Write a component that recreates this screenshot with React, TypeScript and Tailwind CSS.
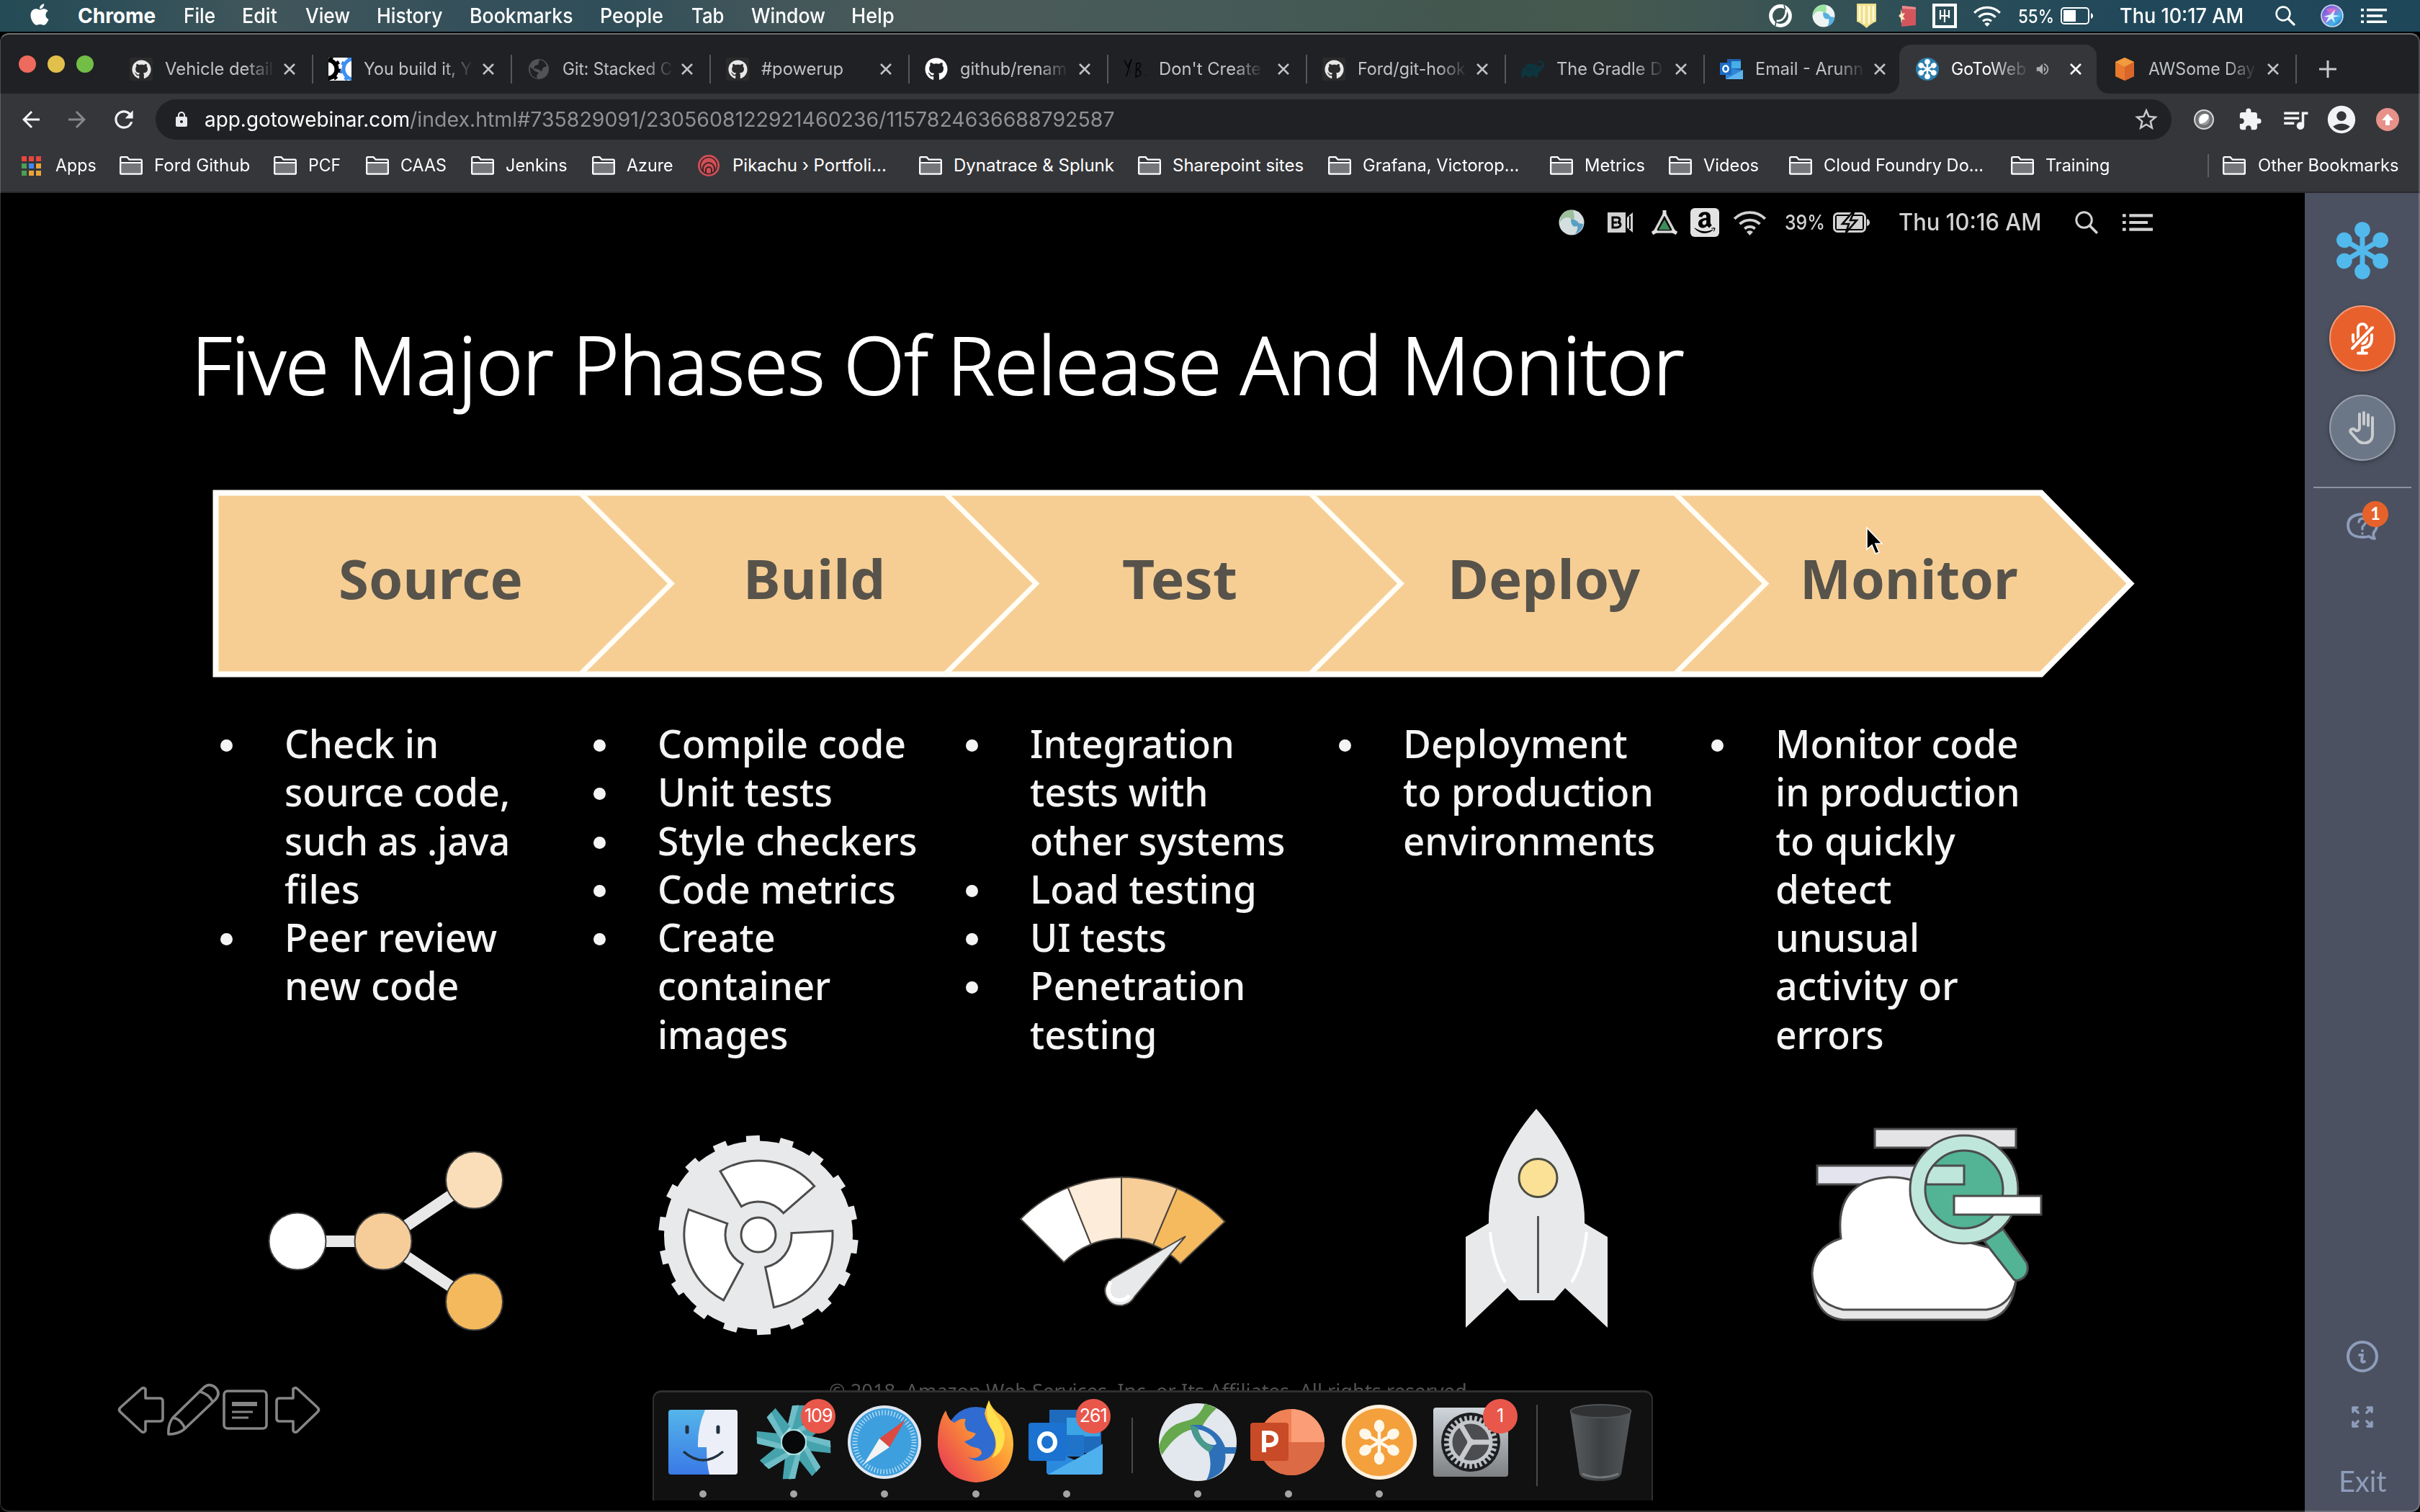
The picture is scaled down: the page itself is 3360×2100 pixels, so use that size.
import React, { useLayoutEffect, useRef, useState } from 'react';
import { FaApple, FaGithub, FaAmazon } from 'react-icons/fa';
import { SiGradle } from 'react-icons/si';
import {
  MdArrowBack,
  MdArrowForward,
  MdRefresh,
  MdLock,
  MdStarBorder,
  MdExtension,
  MdQueueMusic,
  MdAccountCircle,
  MdVolumeUp,
} from 'react-icons/md';

/** One line of text that is condensed or widened to span exactly `w` pixels. */
function Fit({ w, className = '', children }: { w: number; className?: string; children: string }) {
  const ref = useRef<HTMLSpanElement>(null);
  const [scale, setScale] = useState(1);
  useLayoutEffect(() => {
    if (ref.current) setScale(w / ref.current.offsetWidth);
  }, [w, children]);
  return (
    <span className={'block shrink-0 ' + className} style={{ width: w }}>
      <span ref={ref} className="inline-block origin-left whitespace-pre" style={{ transform: `scaleX(${scale})` }}>
        {children}
      </span>
    </span>
  );
}

const polar = (cx: number, cy: number, r: number, deg: number) => {
  const a = (deg * Math.PI) / 180;
  return `${(cx + r * Math.sin(a)).toFixed(1)} ${(cy - r * Math.cos(a)).toFixed(1)}`;
};

/** Ring segment between two radii; angles are degrees clockwise from the top. */
const sector = (cx: number, cy: number, r0: number, r1: number, a0: number, a1: number) =>
  `M${polar(cx, cy, r1, a0)}A${r1} ${r1} 0 0 1 ${polar(cx, cy, r1, a1)}L${polar(cx, cy, r0, a1)}A${r0} ${r0} 0 0 0 ${polar(cx, cy, r0, a0)}Z`;

/* ---------- macOS menu bar ---------- */

const MENUS = [
  { t: 'Chrome', w: 108, cls: 'w-[147px] font-bold' },
  { t: 'File', w: 44, cls: 'w-[81px] font-medium' },
  { t: 'Edit', w: 49, cls: 'w-[88px] font-medium' },
  { t: 'View', w: 62, cls: 'w-[99px] font-medium' },
  { t: 'History', w: 92, cls: 'w-[129px] font-medium' },
  { t: 'Bookmarks', w: 144, cls: 'w-[181px] font-medium' },
  { t: 'People', w: 88, cls: 'w-[127px] font-medium' },
  { t: 'Tab', w: 45, cls: 'w-[83px] font-medium' },
  { t: 'Window', w: 103, cls: 'w-[139px] font-medium' },
  { t: 'Help', w: 60, cls: 'w-[62px] font-medium' },
];

function Wifi({ className = '' }: { className?: string }) {
  return (
    <svg viewBox="0 0 42 32" className={className} fill="none" stroke="currentColor" strokeWidth="3.4">
      <path d="M2 11.5a27 27 0 0 1 38 0M8.5 18a18 18 0 0 1 25 0M14.6 23.8a9.5 9.5 0 0 1 12.8 0" />
      <path d="M21 32l-4-4.4a6 6 0 0 1 8 0z" fill="currentColor" stroke="none" />
    </svg>
  );
}

function Search({ className = '' }: { className?: string }) {
  return (
    <svg viewBox="0 0 28 28" className={className} fill="none" stroke="currentColor" strokeWidth="2.6">
      <circle cx="11" cy="11" r="9.4" />
      <path d="M18 18l9 9" strokeWidth="3.2" />
    </svg>
  );
}

function Lines({ className = '' }: { className?: string }) {
  return (
    <svg viewBox="0 0 36 20" className={className} fill="currentColor">
      <path d="M0 0h4v3.6H0zM8 0h28v3.6H8zM0 8.2h4v3.6H0zM8 8.2h22v3.6H8zM0 16.4h4V20H0zM8 16.4h28V20H8z" />
    </svg>
  );
}

function MenuBar() {
  return (
    <div className="flex h-[44px] shrink-0 items-center bg-[linear-gradient(90deg,#244b56_0%,#2f4f58_5%,#41565b_11%,#35505a_19%,#304e59_25%,#42565a_32%,#4b5a58_38%,#455a56_52%,#43574f_60%,#46594f_66%,#3d5553_72%,#2b4e58_80%,#21485a_88%,#1f475a_100%)] pl-[39px] text-[28px] text-white">
      <div className="w-[69px] shrink-0">
        <FaApple className="h-[34px] w-[32px] -translate-y-[2px]" />
      </div>
      {MENUS.map((m) => (
        <div key={m.t} className={'shrink-0 ' + m.cls}>
          <Fit w={m.w}>{m.t}</Fit>
        </div>
      ))}
      <div className="flex-1" />
      <div className="flex w-[904px] shrink-0 items-center">
        <div className="w-[60px]">
          <svg viewBox="0 0 32 32" className="size-8" fill="none" stroke="white">
            <circle cx="16" cy="16" r="13.4" strokeWidth="5" />
            <path d="M10 23c10 1 16-8 13-19" strokeWidth="2.6" />
            <path d="M21 1.5l2 6M9 30l1-8" stroke="#2f4f56" strokeWidth="1.6" />
          </svg>
        </div>
        <div className="w-[61px]">
          <svg viewBox="0 0 32 32" className="size-8">
            <circle cx="16" cy="16" r="15.5" fill="#eef4f4" />
            <path d="M2 15C6 8 14 8 18 14c2-3 2-8 1-13C9-1 1 6 1 15z" fill="#9be3a0" />
            <path d="M15 12c0 7 4 10 8 8 1 4 0 8-2 11 6-2 10-7 10-13l-6-1c-1-4-6-6-10-5z" fill="#58aee0" />
          </svg>
        </div>
        <div className="w-[59px]">
          <svg viewBox="0 0 29 34" className="h-[34px] w-[29px]">
            <path d="M1 0h27v25q-6 2-13.500 9Q7 27 1 25z" fill="#efe08c" />
            <path d="M5 3v21M11 3v25M18 3v25M24 3v21" stroke="#fffbe2" strokeWidth="2.6" />
          </svg>
        </div>
        <div className="w-[47px]">
          <svg viewBox="0 0 25 30" className="h-[30px] w-[25px]">
            <path d="M5 1l19 2v25L4 30z" fill="#d4565d" />
            <path d="M5 1l19 2v3L5 5z" fill="#e98a8c" />
            <path d="M3 5l2 7 4-1-3 5 3 4H5l-1 6-1-8-3-3 3-3z" fill="#ffe9c0" />
          </svg>
        </div>
        <div className="w-[55px]">
          <svg viewBox="0 0 34 34" className="size-[34px]">
            <path d="M0 0h34v34H0z" fill="white" />
            <path d="M4 4h26v26H4z" fill="#2b4d57" />
            <path d="M11 9v8h12V9M17 8v18M11 17v5M23 17v3" fill="none" stroke="white" strokeWidth="2.200" />
          </svg>
        </div>
        <div className="w-[64px]">
          <Wifi className="h-[30px] w-[42px]" />
        </div>
        <div className="w-[59px]">
          <Fit w={50} className="text-[26px] font-medium">55%</Fit>
        </div>
        <div className="w-[82px]">
          <svg viewBox="0 0 46 24" className="h-6 w-[46px]" fill="none" stroke="white" strokeWidth="2">
            <rect x="1" y="1" width="38" height="22" rx="4" />
            <path d="M4 4h17v16H4z" fill="white" stroke="none" />
            <path d="M42 8q3 1 3 4t-3 4z" fill="white" stroke="none" />
          </svg>
        </div>
        <div className="w-[216px]">
          <Fit w={172} className="font-medium">Thu 10:17 AM</Fit>
        </div>
        <div className="w-[63px]">
          <Search className="size-7" />
        </div>
        <div className="w-[56px]">
          <svg viewBox="0 0 32 32" className="size-8">
            <defs>
              <linearGradient id="siri" x1="0" y1="0" x2="1" y2="1">
                <stop offset="0" stopColor="#3a5bd8" />
                <stop offset=".4" stopColor="#a06fe0" />
                <stop offset=".7" stopColor="#3bb7ea" />
                <stop offset="1" stopColor="#2b3b99" />
              </linearGradient>
            </defs>
            <circle cx="16" cy="16" r="15" fill="url(#siri)" stroke="#cfdcec" strokeWidth="1.600" />
            <path d="M7 7q8-4 16 1l-7 7z" fill="#e56fc3" opacity=".7" />
            <path d="M4 17l10-3 6-7-2 8 9 1-9 2 2 8-5-6-8 6 4-8z" fill="#d9f8ff" />
          </svg>
        </div>
        <Lines className="h-5 w-9" />
      </div>
    </div>
  );
}

/* ---------- browser chrome ---------- */

function Cat({ boxed = true }: { boxed?: boolean }) {
  return boxed ? (
    <div className="flex size-8 items-center justify-center rounded-[3px] bg-[#2b2b2b]">
      <FaGithub className="size-[27px] text-[#e8e8e8]" />
    </div>
  ) : (
    <FaGithub className="size-8 text-white" />
  );
}

const SPOKES = [0, 60, 120, 180, 240, 300];

function Burst({ className = '', color }: { className?: string; color: string }) {
  return (
    <svg viewBox="-36 -40 72 80" className={className} fill={color}>
      {SPOKES.map((a) => (
        <g key={a} transform={`rotate(${a})`}>
          <path d="M-3.500 0v-22h7v22z" />
          <circle cy="-29" r="10.800" />
        </g>
      ))}
      <circle r="6" />
    </svg>
  );
}

const GearIcon = (
  <svg viewBox="0 0 32 32" className="size-8">
    <path d="M0 0h32v32H0z" fill="white" />
    <g fill="none">
      <circle cx="-1" cy="16" r="12.500" stroke="black" strokeWidth="6" />
      <circle cx="-1" cy="16" r="16.500" stroke="black" strokeWidth="4" strokeDasharray="5 6.400" />
      <circle cx="35" cy="16" r="14" stroke="#3f8ff0" strokeWidth="5" />
      <circle cx="35" cy="16" r="17" stroke="#3f8ff0" strokeWidth="4" strokeDasharray="5 6.800" />
    </g>
  </svg>
);

const GlobeIcon = (
  <svg viewBox="0 0 32 32" className="size-8">
    <circle cx="16" cy="16" r="14" fill="#515357" />
    <path d="M17 3q8 1 10 9l-5 2-2 5-5-3-6-1 2-4 4-1 1-3zM4 13l7 6 5 2-3 4 1 4Q4 27 4 16z" fill="#202124" />
  </svg>
);

const YbIcon = (
  <svg viewBox="0 0 32 32" className="size-8" fill="none" stroke="#050506" strokeWidth="1.600">
    <path d="M1 4l5 9 5-11-7 24M9 20h1M18 8l-1 20M17 9c9-5 8 5 1 8 9 0 7 10-1 9M31 24v1" />
  </svg>
);

const OutlookIcon = (
  <svg viewBox="0 0 32 32" className="size-8">
    <path d="M10 2h19v16H10z" fill="#1f5fae" />
    <path d="M16 5h13v10H16z" fill="#46aee8" />
    <path d="M8 14l24 4v12H8z" fill="#2f86d6" />
    <path d="M8 30l24-13v13z" fill="#5cb4ee" />
    <path d="M0 7h16v17H0z" fill="#1d6cc5" />
    <ellipse cx="8" cy="15.500" rx="3.600" ry="4.200" fill="none" stroke="white" strokeWidth="2.400" />
  </svg>
);

const WebinarIcon = (
  <div className="flex size-8 items-center justify-center rounded-full bg-[#2a7fae]">
    <Burst className="h-[28px] w-[26px]" color="#ffffff" />
  </div>
);

const AwsIcon = (
  <svg viewBox="0 0 32 32" className="size-8">
    <path d="M16 0l13 6v20l-13 6-13-6V6z" fill="#e8792e" />
    <path d="M16 0l13 6-13 7L3 6z" fill="#f29a3e" />
    <path d="M16 13l13-7v20l-13 6z" fill="#d9652b" />
  </svg>
);

const TABS = [
  { t: 'Vehicle detail', w: 150, icon: <Cat />, cls: 'w-[276px]', fade: true },
  { t: 'You build it, Y', w: 150, icon: GearIcon, cls: 'w-[276px]', fade: true },
  { t: 'Git: Stacked C', w: 152, icon: GlobeIcon, cls: 'w-[276px]', fade: true },
  { t: '#powerup', w: 114, icon: <Cat />, cls: 'w-[276px]', fade: false },
  { t: 'github/renam', w: 148, icon: <Cat boxed={false} />, cls: 'w-[276px]', fade: true },
  { t: "Don't Create", w: 142, icon: YbIcon, cls: 'w-[276px]', fade: true },
  { t: 'Ford/git-hook', w: 150, icon: <Cat />, cls: 'w-[276px]', fade: true },
  { t: 'The Gradle D', w: 147, icon: <SiGradle className="size-8 text-[#0d3540]" />, cls: 'w-[276px]', fade: true },
  { t: 'Email - Arunn', w: 150, icon: OutlookIcon, cls: 'w-[272px]', fade: true },
  { t: 'GoToWeb', w: 104, icon: WebinarIcon, cls: 'w-[274px]', fade: true, active: true },
  { t: 'AWSome Day', w: 148, icon: AwsIcon, cls: 'w-[276px]', fade: true },
];

function TabStrip() {
  return (
    <div className="flex h-[84px] shrink-0 items-end bg-[#202124] text-[24px]">
      <div className="flex h-[68px] w-[157px] shrink-0 items-center gap-[16px] pb-[14px] pl-[26px]">
        <i className="size-6 rounded-full bg-[#ed6a5e]" />
        <i className="size-6 rounded-full bg-[#e1c04c]" />
        <i className="size-6 rounded-full bg-[#72be47]" />
      </div>
      {TABS.map((tab, i) => (
        <div
          key={tab.t}
          className={
            'relative flex h-[68px] shrink-0 items-center pl-[23px] ' +
            tab.cls +
            (tab.active ? ' rounded-t-[16px] bg-[#35363a] text-white' : ' text-[#bfc2c6]')
          }
        >
          <div className="size-8 shrink-0">{tab.icon}</div>
          <div className="ml-[17px] w-[154px] shrink-0">
            <Fit
              w={tab.w}
              className={
                tab.fade
                  ? tab.active
                    ? '[mask-image:linear-gradient(90deg,#000_50%,transparent_105%)]'
                    : '[mask-image:linear-gradient(90deg,#000_74%,transparent_102%)]'
                  : ''
              }
            >
              {tab.t}
            </Fit>
          </div>
          {tab.active && <MdVolumeUp className="mr-[16px] -ml-[38px] size-[22px] shrink-0 text-[#a9abae]" />}
          <svg viewBox="0 0 16 16" className="ml-[11px] size-4 shrink-0" stroke="currentColor" strokeWidth="2.600">
            <path d="M1 1l14 14M15 1L1 15" />
          </svg>
          {i !== 8 && i !== 9 && <div className="absolute right-[-2px] h-10 w-[2px] bg-[#55575b]" />}
          {tab.active && (
            <>
              <div className="absolute bottom-0 -left-4 size-4 bg-[radial-gradient(circle_at_0_0,transparent_15.500px,#35363a_16px)]" />
              <div className="absolute -right-4 bottom-0 size-4 bg-[radial-gradient(circle_at_100%_0,transparent_15.500px,#35363a_16px)]" />
            </>
          )}
        </div>
      ))}
      <div className="flex h-[68px] items-center pl-[33px]">
        <svg viewBox="0 0 24 24" className="size-6" stroke="#c6c8cb" strokeWidth="3">
          <path d="M12 0v24M0 12h24" />
        </svg>
      </div>
    </div>
  );
}

function Toolbar() {
  return (
    <div className="flex h-[72px] shrink-0 items-center bg-[#35363a] text-[#f1f3f4]">
      <div className="flex w-[216px] shrink-0 items-center pl-[25px]">
        <MdArrowBack className="mr-[28px] size-[36px]" />
        <MdArrowForward className="mr-[28px] size-[36px] text-[#86878a]" />
        <MdRefresh className="size-[38px]" />
      </div>
      <div className="flex h-[56px] w-[2799px] shrink-0 items-center rounded-full bg-[#202124] pl-[24px]">
        <MdLock className="size-[24px] text-[#e8eaed]" />
        <Fit w={285} className="ml-[20px] text-[28px] text-white">app.gotowebinar.com</Fit>
        <Fit w={979} className="text-[28px] text-[#8f9195]">
          /index.html#735829091/2305608122921460236/1157824636688792587
        </Fit>
        <MdStarBorder className="mr-[16px] ml-auto size-[38px] text-[#c7c9cc]" />
      </div>
      <div className="flex flex-1 items-center pl-[31px]">
        <svg viewBox="0 0 28 28" className="mr-[33px] size-7">
          <circle cx="14" cy="14" r="13" fill="#6d6f72" stroke="#d7d7d7" strokeWidth="2" />
          <circle cx="14" cy="14" r="8" fill="#9a9a9a" />
          <path d="M8 20Q5 8 15 6q8 0 5 7-4 7-12 7z" fill="white" />
        </svg>
        <MdExtension className="mr-[25px] size-[34px]" />
        <MdQueueMusic className="mr-[20px] size-[42px]" />
        <MdAccountCircle className="mr-[25px] size-[46px]" />
        <svg viewBox="0 0 32 32" className="size-8">
          <circle cx="16" cy="16" r="16" fill="#e69189" />
          <path d="M16 8l8 9h-5v7h-6v-7H8z" fill="white" />
        </svg>
      </div>
    </div>
  );
}

const BOOKMARKS = [
  { t: 'Ford Github', w: 133, cls: 'w-[214px]' },
  { t: 'PCF', w: 45, cls: 'w-[128px]' },
  { t: 'CAAS', w: 64, cls: 'w-[146px]' },
  { t: 'Jenkins', w: 86, cls: 'w-[168px]' },
  { t: 'Azure', w: 65, cls: 'w-[147px]' },
  { t: 'Pikachu › Portfoli...', w: 214, cls: 'w-[307px]' },
  { t: 'Dynatrace & Splunk', w: 223, cls: 'w-[304px]' },
  { t: 'Sharepoint sites', w: 182, cls: 'w-[264px]' },
  { t: 'Grafana, Victorop...', w: 217, cls: 'w-[308px]' },
  { t: 'Metrics', w: 84, cls: 'w-[165px]' },
  { t: 'Videos', w: 77, cls: 'w-[167px]' },
  { t: 'Cloud Foundry Do...', w: 222, cls: 'w-[308px]' },
  { t: 'Training', w: 89, cls: 'w-[273px]' },
];

function Folder() {
  return (
    <svg viewBox="0 0 32 26" className="h-[26px] w-8 shrink-0" stroke="white" strokeWidth="2.200">
      <path d="M1.200 23V2.500q0-1.300 1.300-1.300h8l3 3.400h16q1.300 0 1.300 1.300V23q0 1.500-1.500 1.500H2.700q-1.500 0-1.500-1.500z" fill="#35363a" />
      <path d="M1.200 9h29.600v14q0 1.500-1.500 1.500H2.700q-1.500 0-1.500-1.500z" fill="#75767a" />
    </svg>
  );
}

function BookmarkBar() {
  return (
    <div className="flex h-[66px] shrink-0 items-center border-b-2 border-[#29292c] bg-[#35363a] pb-[8px] pl-[30px] text-[24px] text-white">
      <div className="flex w-[136px] shrink-0 items-center gap-[20px]">
        <svg viewBox="0 0 27 27" className="size-[27px]">
          <path d="M0 0h7v7H0zM10 0h7v7h-7zM20 0h7v7h-7z" fill="#e8453c" />
          <path d="M0 10h7v7H0zM0 20h7v7H0z" fill="#4d9e56" />
          <path d="M10 10h7v7h-7z" fill="#4286f5" />
          <path d="M20 10h7v7h-7zM10 20h7v7h-7zM20 20h7v7h-7z" fill="#e9a33b" />
        </svg>
        <Fit w={57}>Apps</Fit>
      </div>
      {BOOKMARKS.map((b, i) => (
        <div key={b.t} className={'flex shrink-0 items-center gap-[16px] ' + b.cls}>
          {i === 5 ? (
            <svg viewBox="0 0 32 32" className="size-8" fill="none">
              <circle cx="15" cy="16" r="15" fill="#d24f55" />
              <circle cx="15" cy="16" r="11.500" stroke="#3a2528" strokeWidth="1.600" />
              <path d="M7 25v-5a8 8 0 0 1 16 0v5M11 27v-5a4 4 0 0 1 8 0v5" stroke="#3a2528" strokeWidth="2" />
            </svg>
          ) : (
            <Folder />
          )}
          <Fit w={b.w}>{b.t}</Fit>
        </div>
      ))}
      <div className="h-8 w-[2px] bg-[#5d5e62]" />
      <div className="ml-[19px] flex items-center gap-[17px]">
        <Folder />
        <Fit w={196}>Other Bookmarks</Fit>
      </div>
    </div>
  );
}

/* ---------- shared slide ---------- */

function SharedMenuBar() {
  return (
    <div className="flex h-[82px] items-center pl-[2164px] font-medium text-[#d2d2d2]">
      <div className="w-[66px]">
        <svg viewBox="0 0 36 36" className="size-9">
          <circle cx="18" cy="18" r="17.500" fill="#d5dfe0" />
          <path d="M2 18C8 8 16 10 20 16c3-3 2-9 0-15C9-1 1 8 2 18z" fill="#9dbf9c" />
          <path d="M17 14c0 8 4 11 9 9 1 4-1 8-3 11 7-3 11-8 11-14l-6-1c-2-4-7-6-11-5z" fill="#5a9fc4" />
        </svg>
      </div>
      <div className="w-[63px]">
        <svg viewBox="0 0 40 30" className="h-[30px] w-10">
          <path d="M2 1h25v28H2z" fill="#d2d2d2" />
          <path d="M29 8l8-7v28l-8-7z" fill="#d2d2d2" />
          <path d="M9 8v14h6q5-1 5-4t-4-3q3-1 3-4t-4-3zM9 15h6" fill="none" stroke="black" strokeWidth="3" />
          <path d="M33 6v18" stroke="black" strokeWidth="2" />
        </svg>
      </div>
      <div className="w-[54px]">
        <svg viewBox="0 0 36 34" className="h-[34px] w-9" fill="none" strokeLinejoin="round">
          <path d="M18 4L4 30h28z" stroke="#d2d2d2" strokeWidth="3.600" />
          <path d="M18 13l-8 14h16z" fill="#3f8a5b" />
          <path d="M18 0v8M1 32l7-4M35 32l-7-4" stroke="#e2e2e2" strokeWidth="5" />
        </svg>
      </div>
      <div className="w-[59px]">
        <div className="flex h-10 w-10 items-center justify-center rounded-[6px] bg-[#e2e2e2]">
          <FaAmazon className="size-[34px] text-black" />
        </div>
      </div>
      <div className="w-[72px]">
        <Wifi className="h-[36px] w-[47px]" />
      </div>
      <div className="w-[67px]">
        <Fit w={56} className="text-[28px]">39%</Fit>
      </div>
      <div className="w-[91px]">
        <svg viewBox="0 0 51 28" className="h-7 w-[51px]" fill="none">
          <rect x="1.500" y="1.500" width="43" height="25" rx="5" stroke="#d2d2d2" strokeWidth="3" />
          <path d="M5 5h36v18H5z" fill="#d2d2d2" />
          <path d="M47 9q4 1 4 5t-4 5z" fill="#d2d2d2" />
          <path d="M27 0L13 16h9l-4 12 15-17h-9l5-11z" fill="#d2d2d2" stroke="black" strokeWidth="2.600" />
        </svg>
      </div>
      <div className="w-[245px]">
        <Fit w={198} className="text-[32px]">Thu 10:16 AM</Fit>
      </div>
      <div className="w-[66px]">
        <Search className="size-8" />
      </div>
      <Lines className="h-6 w-[42px]" />
    </div>
  );
}

const SEAMS = [806, 1312.500, 1819, 2325.500];

function Phases() {
  return (
    <div className="relative mt-[117px] ml-[290px] h-[269px] w-[2680px]">
      <svg viewBox="290 676 2680 269" className="size-full" fill="none" stroke="#fffdf6" strokeWidth="8">
        <path d="M299.500 684.500H2834L2958 810.500 2834 936.500H299.500z" fill="#f6ce94" stroke="#fffefb" />
        {SEAMS.map((x) => (
          <path key={x} d={`M${x - 2} 683l128 127.500L${x - 2} 938`} strokeWidth="7" />
        ))}
      </svg>
      <div className="absolute inset-0 flex pt-[89px] pl-[180px] font-['Noto_Sans'] text-[76px] leading-[76px] font-bold text-[#57534b]">
        <div className="w-[562px]"><Fit w={256}>Source</Fit></div>
        <div className="w-[526px]"><Fit w={197}>Build</Fit></div>
        <div className="w-[452px]"><Fit w={160}>Test</Fit></div>
        <div className="w-[489px]"><Fit w={267}>Deploy</Fit></div>
        <div><Fit w={303}>Monitor</Fit></div>
      </div>
      <svg viewBox="0 0 24 42" className="absolute top-[55px] left-[2300px] h-[42px] w-6">
        <path d="M2 2v30l7-6 5 12 5-2-5-12h9z" fill="black" stroke="white" strokeWidth="1.600" />
      </svg>
    </div>
  );
}

type Item = [string, number][];
const COLUMNS: Item[][] = [
  [
    [['Check in', 214], ['source code,', 313], ['such as .java', 313], ['files', 105]],
    [['Peer review', 295], ['new code', 242]],
  ],
  [
    [['Compile code', 345]],
    [['Unit tests', 243]],
    [['Style checkers', 361]],
    [['Code metrics', 331]],
    [['Create', 164], ['container', 240], ['images', 181]],
  ],
  [
    [['Integration', 284], ['tests with', 248], ['other systems', 354]],
    [['Load testing', 315]],
    [['UI tests', 190]],
    [['Penetration', 299], ['testing', 177]],
  ],
  [[['Deployment', 312], ['to production', 348], ['environments', 350]]],
  [
    [
      ['Monitor code', 338],
      ['in production', 340],
      ['to quickly', 249],
      ['detect', 161],
      ['unusual', 200],
      ['activity or', 254],
      ['errors', 151],
    ],
  ],
];

function Lists() {
  return (
    <div className="mt-[54px] ml-[306px] grid h-[480px] w-[2588px] grid-cols-5 font-['Noto_Sans'] text-[54px] leading-[67.300px] text-[#f4f4f4]">
      {COLUMNS.map((items, i) => (
        <ul key={i}>
          {items.map((lines) => (
            <li key={lines[0][0]} className="flex">
              <i className="mt-[28px] mr-[72px] size-[17px] shrink-0 rounded-full bg-[#f4f4f4]" />
              <div>
                {lines.map(([t, w]) => (
                  <Fit key={t} w={w} className="font-medium">{t}</Fit>
                ))}
              </div>
            </li>
          ))}
        </ul>
      ))}
    </div>
  );
}

const TEETH = Array.from({ length: 18 }, (_, i) => -3 + i * 20);

function Artwork() {
  return (
    <div className="mt-[51px] flex h-[330px] pl-[360px]">
      <svg viewBox="360 1530 520 330" className="w-[520px] shrink-0" stroke="#3d3d3d" strokeWidth="2">
        <g stroke="#e8e8e8" strokeWidth="16">
          <path d="M413 1724h119M532 1724l126-85M532 1724l126 84" />
        </g>
        <circle cx="413" cy="1724" r="39.500" fill="white" />
        <circle cx="532" cy="1724" r="39.500" fill="#f6cd98" />
        <circle cx="658.500" cy="1639" r="39.500" fill="#fadeb9" />
        <circle cx="658.500" cy="1808" r="39.500" fill="#f4b95c" />
      </svg>
      <svg viewBox="880 1530 520 330" className="w-[520px] shrink-0">
        <g fill="#e8e9ea">
          <circle cx="1053" cy="1715.500" r="131" />
          {TEETH.map((a) => (
            <path key={a} d="M1043 1577h19v14h-19z" transform={`rotate(${a} 1053 1715.500)`} />
          ))}
        </g>
        <g fill="white" stroke="#4c4c4c" strokeWidth="3">
          <path d={sector(1053, 1715, 46, 103, -31, 49)} />
          <path d={sector(1053, 1715, 46, 103, 87, 168)} />
          <path d={sector(1053, 1715, 46, 103, 208, 290)} />
          <circle cx="1053" cy="1715" r="24" />
        </g>
      </svg>
      <svg viewBox="1400 1530 560 330" className="w-[560px] shrink-0" stroke="#4b4640" strokeWidth="2">
        <path d={sector(1557, 1833, 113, 198, -45, -22)} fill="white" />
        <path d={sector(1557, 1833, 113, 198, -22, 0)} fill="#fdecd9" />
        <path d={sector(1557, 1833, 113, 198, 0, 23)} fill="#f7cd98" />
        <path d={sector(1557, 1833, 113, 198, 23, 46.500)} fill="#f5ba5e" />
        <path d="M1646 1717L1545 1775Q1531 1785 1535 1798 1541 1815 1559 1813 1570 1811 1576 1800z" fill="#e8e9ea" />
        <path d="M1542 1780q-8 18 6 25 14 3 20-6" fill="none" stroke="white" strokeWidth="5" />
      </svg>
      <svg viewBox="1960 1530 520 330" className="w-[520px] shrink-0">
        <path
          d="M2133 1540Q2202 1620 2200 1699L2232 1718V1844L2173 1789 2158 1806H2109L2093 1789 2035 1844V1718L2067 1699Q2065 1620 2133 1540z"
          fill="#e8e9ea"
        />
        <circle cx="2135.500" cy="1636" r="26.500" fill="#fbe196" stroke="#4c4c44" strokeWidth="3" />
        <path d="M2135.500 1689v107" stroke="#555" strokeWidth="3" />
        <path d="M2069 1711q4 42 21 70M2203 1711q-4 42-21 70" fill="none" stroke="white" strokeWidth="4" />
      </svg>
      <svg viewBox="2480 1530 420 330" className="w-[420px] shrink-0" stroke="#4c4c4c" strokeWidth="3">
        <path d="M2603 1568h196v26h-196z" fill="#e4e4e6" />
        <path d="M2523 1619h204v26h-204z" fill="#e3e4ee" />
        <path d="M2517 1780q4 50 42 53h199q36-6 41-55z" fill="#e6e6e6" />
        <path
          d="M2556 1720Q2546 1640 2622 1635 2700 1634 2712 1720L2790 1740Q2800 1755 2799 1778 2793 1814 2758 1819H2559Q2517 1810 2516 1768 2518 1732 2556 1720z"
          fill="white"
        />
        <path d="M2755 1724l26-17 33 47q4 12-4 20-9 7-14 3z" fill="#52b395" />
        <circle cx="2727" cy="1652" r="75" fill="#bfe6da" />
        <circle cx="2727" cy="1652" r="54" fill="#52b395" />
        <path d="M2684 1619h43v26h-53q0-14 10-26z" fill="#bfe6da" />
        <path d="M2713 1661h121v26h-121z" fill="white" />
      </svg>
    </div>
  );
}

function SlideControls() {
  return (
    <svg viewBox="160 1918 290 80" className="mt-[58px] h-[80px] w-[290px]" fill="none" stroke="#858585" strokeWidth="3.600" strokeLinejoin="round">
      <path d="M202 1942V1929q-3-3-6 0L167 1955q-3 3 0 6l29 27q4 3 6-1v-13h20q4 0 4-4v-24q0-4-4-4z" />
      <path d="M407 1942V1929q3-3 6 0l28 26q3 3 0 6l-28 27q-4 3-6-1v-13h-19q-4 0-4-4v-24q0-4 4-4z" />
      <path d="M234 1992q-1-14 6-23l42-41q8-8 17-1 8 8 0 17l-42 40q-9 8-23 8zM240 1969q12 2 17 16M278 1933q12 3 18 15" />
      <rect x="311" y="1932" width="59" height="52" rx="5" />
      <path d="M322 1950h35" strokeWidth="6" />
      <path d="M322 1961h29M322 1969h23" strokeWidth="3" />
    </svg>
  );
}

/* ---------- dock ---------- */

function Badge({ text, className }: { text: string; className: string }) {
  return (
    <span
      className={
        'absolute top-[9px] flex size-[48px] items-center justify-center rounded-full bg-[#e9574b] text-[25px] tracking-[-1px] text-white ' +
        className
      }
    >
      {text}
    </span>
  );
}

function DockApp({ children, badge, dot = true }: { children: React.ReactNode; badge?: React.ReactNode; dot?: boolean }) {
  return (
    <div className="relative flex h-full w-[126.200px] shrink-0 flex-col items-center">
      <svg viewBox="-63 -69 126 136" className="h-[136px] w-[126px] shrink-0">
        {children}
      </svg>
      {badge}
      {dot && <i className="size-[10px] rounded-full bg-[#a5a5a5]" />}
    </div>
  );
}

const PETALS = [8, 53, 98, 143, 188, 233, 278, 323];
const COGS = Array.from({ length: 30 }, (_, i) => i * 12);

function Dock() {
  return (
    <div className="relative flex h-[153px] w-[1389px] rounded-t-[12px] border-x-2 border-t-[3px] border-[#2f2f2f] bg-[#111111] pl-[5px]">
      <DockApp>
        <defs>
          <linearGradient id="finder" x1="0" y1="0" x2="0" y2="1">
            <stop offset="0" stopColor="#54b5ea" />
            <stop offset="1" stopColor="#3a79e6" />
          </linearGradient>
        </defs>
        <rect x="-48" y="-45" width="96" height="90" rx="4" fill="url(#finder)" />
        <path d="M3-45Q-8-20-7 7H5Q5 30 9 45h35q4 0 4-4v-82q0-4-4-4z" fill="#eceff7" />
        <path d="M-22-21v7M21-21v7" stroke="#22313f" strokeWidth="5" strokeLinecap="round" />
        <path d="M-27 13Q0 37 28 13" fill="none" stroke="#22313f" strokeWidth="3.500" />
      </DockApp>
      <DockApp badge={<Badge text="109" className="left-[73px]" />}>
        {PETALS.map((a) => (
          <g key={a} transform={`rotate(${a})`}>
            <path d="M-9-50L8-53 9-20-12-16z" fill="#45a3ad" />
            <path d="M-9-50L0-52-5-17-12-16z" fill="#6fbdc6" />
            <path d="M-12-16L9-20 4-12z" fill="#a8e0e2" />
          </g>
        ))}
        <circle r="16" fill="#060809" />
      </DockApp>
      <DockApp>
        <circle r="51" fill="#dfe6f0" />
        <circle r="47" fill="#3d9fdd" />
        <circle r="41" fill="none" stroke="#cfe8f8" strokeWidth="7" strokeDasharray="1.200 3.100" />
        <path d="M29-31L7 7-7-5z" fill="#dc4a41" />
        <path d="M-29 31L-7-5 7 7z" fill="#f3f3f3" />
      </DockApp>
      <DockApp>
        <defs>
          <linearGradient id="fox" x1="1" y1="0" x2="0" y2=".8">
            <stop offset="0" stopColor="#ffe14a" />
            <stop offset=".45" stopColor="#fd9a34" />
            <stop offset="1" stopColor="#e93f52" />
          </linearGradient>
        </defs>
        <circle cx="0" cy="-8" r="41" fill="#2f6bd0" />
        <path
          d="M-42-44Q-38-30-30-27-20-34-14-32-18-24-12-16L0-12Q-4-4-16-1-10 6 2 8 8 10 8 16 0 26-12 20 4 32 20 20 32 8 24-14 14-28 12-40 14-50 18-58 22-46 34-38 52-24 52 4 50 52 0 56-48 52-53 6-54-26-42-44z"
          fill="url(#fox)"
        />
        <path d="M18-58Q10-40 22-18 34 4 22 22 40 14 40-10 38-24 28-38 20-48 18-58z" fill="#ffe04d" />
      </DockApp>
      <DockApp badge={<Badge text="261" className="left-[76px]" />}>
        <path d="M-24-45h72v60h-72z" fill="#1e6bbd" />
        <path d="M0-34h46V-8H0z" fill="#3ba5e6" />
        <path d="M-2-10h26v30H-2z" fill="#1f74c9" />
        <path d="M-28 8L14 26 50 2v39q0 4-4 4h-70q-4 0-4-4z" fill="#2b8ade" />
        <path d="M-26 45L50 3v38q0 4-4 4z" fill="#4fb0ee" />
        <rect x="-53" y="-27" width="52" height="53" rx="4" fill="#1b72d0" />
        <ellipse cx="-27" cy="0" rx="11" ry="12" fill="none" stroke="white" strokeWidth="6" />
      </DockApp>
      <div className="w-[56px] pt-[35px]">
        <div className="ml-[27px] h-[77px] w-[2px] bg-[#4a4a4a]" />
      </div>
      <DockApp>
        <circle r="54" fill="#e3e7ee" />
        <path d="M-54 6Q-46-24-14-30 2-34 10-54L26-47Q12-34 4-18-24-22-50 18z" fill="#66a84d" />
        <path d="M-10-24Q-8 0 14 10 22 34 12 53 26 48 34 40 40 26 38 16h14l2-9H38Q30-16 4-24z" fill="#2e70b7" />
        <path d="M0-18Q2-4 14 2 24 6 26 2 20-14 0-18z" fill="#dfe8ee" />
        <path d="M-10-24Q-6 2 16 14L22 6Q4 0 0-20z" fill="#4a9a8c" />
      </DockApp>
      <DockApp>
        <circle cx="4" r="46" fill="#e8734a" />
        <path d="M4-46A46 46 0 0 1 50 0H4z" fill="#fb9d76" />
        <path d="M4-46A46 46 0 0 0-42 0H4z" fill="#f08055" />
        <path d="M-42 0A46 46 0 0 0 50 0z" fill="#dc6a44" />
        <rect x="-53" y="-27" width="53" height="53" rx="4" fill="#c94a27" />
        <path d="M-34 14v-27h8q9 1 9 8.500t-9 8.500h-8" fill="none" stroke="white" strokeWidth="6" />
      </DockApp>
      <DockApp>
        <circle r="52" fill="#fdf1df" />
        <circle r="47" fill="#f4a03c" />
        <g transform="scale(.8)" fill="#fff8ea">
          {SPOKES.map((a) => (
            <g key={a} transform={`rotate(${a})`}>
              <path d="M-2.800 0v-24h5.600V0z" />
              <ellipse cy="-28" rx="9" ry="11" />
            </g>
          ))}
        </g>
      </DockApp>
      <DockApp dot={false} badge={<Badge text="1" className="left-[80px]" />}>
        <defs>
          <linearGradient id="prefs" x1="0" y1="0" x2="0" y2="1">
            <stop offset="0" stopColor="#cfd6dc" />
            <stop offset="1" stopColor="#7e8082" />
          </linearGradient>
        </defs>
        <rect x="-52" y="-48" width="104" height="96" rx="4" fill="url(#prefs)" />
        <circle r="41" fill="#1d1e20" />
        {COGS.map((a) => (
          <path key={a} d="M-1.800-37h3.600v8h-3.600z" fill="#b9bcc0" transform={`rotate(${a})`} />
        ))}
        <circle r="28" fill="#4c4d50" stroke="#c3c6ca" strokeWidth="5" />
        <path d="M0 0h27M0 0l-14-24M0 0l-14 24" stroke="#c8cacd" strokeWidth="7" />
        <circle r="5" fill="#c8cacd" />
      </DockApp>
      <div className="w-[58px] pt-[17px]">
        <div className="ml-[28px] h-[113px] w-[2px] bg-[#4a4a4a]" />
      </div>
      <DockApp dot={false}>
        <defs>
          <linearGradient id="bin" x1="0" y1="0" x2="1" y2="0">
            <stop offset="0" stopColor="#5a5d60" />
            <stop offset=".5" stopColor="#3d4043" />
            <stop offset="1" stopColor="#54575a" />
          </linearGradient>
        </defs>
        <path d="M-46-44L-33 44Q-30 53-4 54 22 53 25 44L39-44z" fill="url(#bin)" />
        <ellipse cx="-3.500" cy="-43" rx="42" ry="9" fill="#303234" stroke="#505356" strokeWidth="2" />
        <path d="M-29 44q24 10 50 0" fill="none" stroke="#74777a" strokeWidth="3" />
      </DockApp>
    </div>
  );
}

function Slide() {
  return (
    <div className="flex w-[3200px] shrink-0 flex-col overflow-hidden bg-black">
      <SharedMenuBar />
      <h1 className="mt-[99px] mb-[-2px] ml-[266px] font-['Open_Sans'] text-[111px] leading-[112px] font-light text-white [-webkit-text-stroke:2.200px_white] [word-spacing:-2px]">
        <Fit w={2072}>Five Major Phases Of Release And Monitor</Fit>
      </h1>
      <Phases />
      <Lists />
      <Artwork />
      <div className="flex h-[238px] shrink-0">
        <div className="w-[906px] shrink-0 pl-[160px]">
          <SlideControls />
        </div>
        <div className="pt-[53px]">
          <div className="-mb-[18px] h-[36px] pl-[245px] font-['Noto_Sans'] text-[28px] leading-[36px] text-[#525252]">
            <Fit w={893}>© 2018, Amazon Web Services, Inc. or Its Affiliates. All rights reserved.</Fit>
          </div>
          <Dock />
        </div>
      </div>
    </div>
  );
}

/* ---------- webinar sidebar ---------- */

function Sidebar() {
  return (
    <div className="flex flex-1 flex-col items-center bg-[#4b5160] pt-[40px] text-[#8d9dbb]">
      <Burst className="h-[80px] w-[72px]" color="#51b9ec" />
      <div className="mt-[36px] flex size-[92px] items-center justify-center rounded-full border-2 border-[#f09a78] bg-[#e8602c] shadow-[0_2px_6px_rgba(0,0,0,.3)]">
        <svg viewBox="0 0 32 46" className="h-[46px] w-8" fill="none" stroke="white" strokeWidth="4" strokeLinecap="round">
          <path d="M10 23V9a6 6 0 0 1 12 0M22 18v6q-1 5-6 6M3 18v7q1 3 2 5M29 18v6q-1 12-13 12M16 37v6M10 43.500h12" />
          <path d="M2 37L30 8" stroke="#e8602c" strokeWidth="8" />
          <path d="M2 37L30 8" />
        </svg>
      </div>
      <div className="mt-[32px] flex size-[92px] items-center justify-center rounded-full border-2 border-[#989eab] bg-[#6b7787] shadow-[0_2px_6px_rgba(0,0,0,.3)]">
        <svg viewBox="0 0 36 46" className="h-[46px] w-9 -translate-x-[1px]" fill="none" stroke="#c9cbce" strokeWidth="4" strokeLinecap="round" strokeLinejoin="round">
          <path d="M15 4v19q0 5-5 4-4-4-7-1-2 2 1 5l10 11q8 5 15 0 4-3 4-9V9M21 2v16M27 5v15" />
        </svg>
      </div>
      <div className="mt-[36px] h-[2px] w-[136px] bg-[#8d93a0]" />
      <div className="relative mt-[18px] h-[54px] w-[44px]">
        <svg viewBox="0 0 44 38" className="absolute top-[16px] left-0 h-[38px] w-11" fill="none" stroke="#8d9dbb" strokeWidth="3.800" strokeLinecap="round" strokeLinejoin="round">
          <path d="M32 5Q27 2 22 2 2 3 2 18 3 34 22 34q6 0 9-1 4 3 8 3-3-4-1-9 4-4 4-9" />
          <path d="M17 13q1-5 5-5 6 1 5 5-1 3-5 7v3M22 29v.1" strokeWidth="3.400" />
        </svg>
        <span className="absolute top-0 left-[22px] flex size-9 items-center justify-center rounded-full bg-[#e6622a] pb-[2px] font-['Lato'] text-[24px] font-bold text-white">
          1
        </span>
      </div>
      <div className="flex-1" />
      <svg viewBox="0 0 44 44" className="size-11" fill="none" stroke="#8d9dbb" strokeWidth="4" strokeLinecap="round">
        <circle cx="22" cy="22" r="20" />
        <path d="M18 20h4l-1 8q0 3 4 1M22 14v.2" strokeWidth="3.800" />
      </svg>
      <svg viewBox="0 0 30 30" className="mt-[47px] size-[30px]" fill="none" stroke="#8d9dbb" strokeWidth="3.600" strokeLinecap="round" strokeLinejoin="round">
        <path d="M2 8V2h6M2 2l7 7M22 2h6v6M28 2l-7 7M2 22v6h6M2 28l7-7M28 22v6h-6M28 28l-7-7" />
      </svg>
      <div className="mt-[49px] mb-[18px] pl-[1px] font-['Lato'] text-[41px] leading-[50px]">
        <Fit w={67}>Exit</Fit>
      </div>
    </div>
  );
}

export default function App() {
  return (
    <div className="flex h-[2100px] w-[3360px] flex-col overflow-hidden bg-black font-['Inter',sans-serif] antialiased">
      <MenuBar />
      <div className="relative mt-[2px] flex flex-1 flex-col overflow-hidden rounded-[12px]">
        <TabStrip />
        <Toolbar />
        <BookmarkBar />
        <div className="flex flex-1">
          <Slide />
          <Sidebar />
        </div>
        <div className="pointer-events-none absolute inset-0 rounded-[12px] border-2 border-l border-[#ffffff33] border-t-[#6f7172]" />
      </div>
    </div>
  );
}
